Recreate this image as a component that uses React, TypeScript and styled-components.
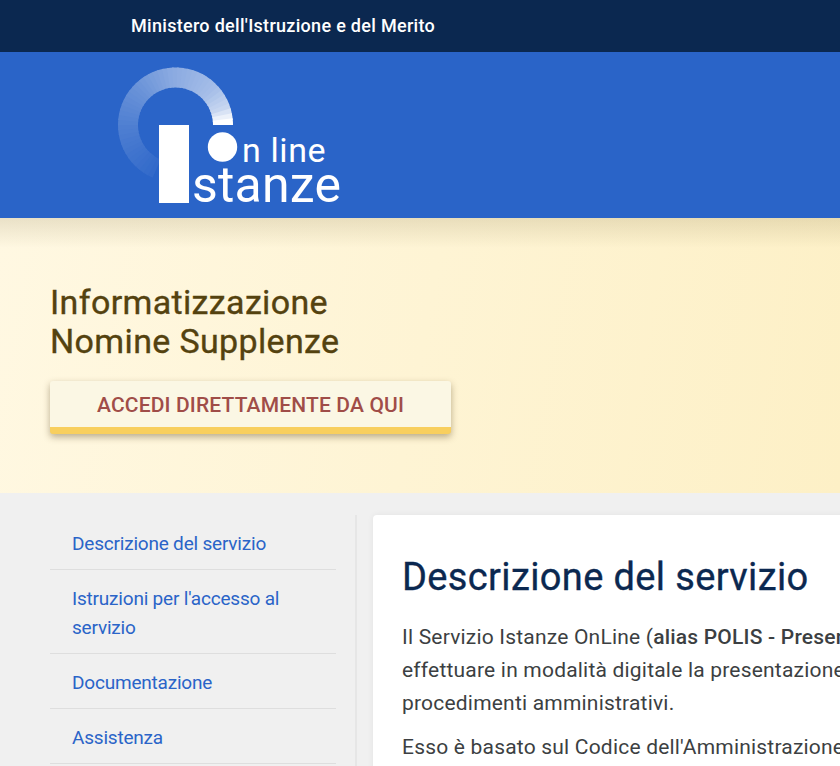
import React from 'react';
import styled, {createGlobalStyle} from 'styled-components';

const FONT = `Roboto, "Noto Sans", "Liberation Sans", sans-serif`;

const menuItems = [
    "Descrizione del servizio",
    "Istruzioni per l'accesso al servizio",
    "Documentazione",
    "Assistenza",
];

// the ring fades from white into the header blue, so it is drawn as short arcs
const RING_STEPS = 48;
const RING_SWEEP = 245;
const ringStops = [
    [0, 1],
    [0.06, 0.74],
    [0.16, 0.58],
    [0.37, 0.45],
    [0.55, 0.29],
    [0.73, 0.17],
    [1, 0.03],
];

const ringAlpha = (t: number) => {
    for (let i = 1; i < ringStops.length; i++) {
        const [t0, a0] = ringStops[i - 1];
        const [t1, a1] = ringStops[i];
        if (t <= t1) return a0 + (a1 - a0) * (t - t0) / (t1 - t0);
    }
    return 0;
};

const ringPoint = (deg: number) => {
    const rad = deg * Math.PI / 180;
    return `${75.5 + 47.5 * Math.cos(rad)} ${65 - 47.5 * Math.sin(rad)}`;
};

const ringColor = (t: number) => {
    const a = ringAlpha(t);
    const mix = (c: number) => Math.round(c + (255 - c) * a);
    return `rgb(${mix(42)},${mix(100)},${mix(200)})`;
};

const Logo = () => (
    <LogoSvg viewBox="0 0 250 150" width="250" height="150">
        {Array.from({length: RING_STEPS}, (_, i) => RING_STEPS - 1 - i).map((i) => {
            const start = i / RING_STEPS * RING_SWEEP;
            const end = (i + 1.3) / RING_STEPS * RING_SWEEP;
            return (
                <path
                    key={i}
                    d={`M ${ringPoint(start)} A 47.5 47.5 0 0 0 ${ringPoint(end)}`}
                    fill="none"
                    stroke={ringColor(i / RING_STEPS)}
                    strokeWidth="20"
                />
            );
        })}
        <rect x="59" y="65" width="30" height="78" fill="#fff"/>
        <circle cx="122.5" cy="87" r="14.7" fill="#fff"/>
        <LogoText x="142" y="102" fontSize="34" letterSpacing="0.6">n line</LogoText>
        <LogoText x="92" y="142" fontSize="50" letterSpacing="0.2">stanze</LogoText>
    </LogoSvg>
);

export default function App() {
    return (
        <>
            <GlobalStyle/>
            <Page>
                <TopBar>
                    <Ministry>Ministero dell'Istruzione e del Merito</Ministry>
                </TopBar>
                <BrandBar>
                    <Logo/>
                </BrandBar>
                <Hero>
                    <HeroTitle>Informatizzazione<br/>Nomine Supplenze</HeroTitle>
                    <HeroButton href="#">ACCEDI DIRETTAMENTE DA QUI</HeroButton>
                </Hero>
                <Content>
                    <Sidebar>
                        <Menu>
                            {menuItems.map((item) => (
                                <MenuItem key={item}>
                                    <MenuLink href="#">{item}</MenuLink>
                                </MenuItem>
                            ))}
                        </Menu>
                    </Sidebar>
                    <Card>
                        <CardTitle>Descrizione del servizio</CardTitle>
                        <Paragraph>
                            Il Servizio Istanze OnLine (<b>alias POLIS - Presentazione On Line delle IStanze</b>) ti consente di<br/>
                            effettuare in modalità digitale la presentazione delle domande connesse ai principali<br/>
                            procedimenti amministrativi.
                        </Paragraph>
                        <Paragraph>
                            Esso è basato sul Codice dell'Amministrazione Digitale e garantisce
                        </Paragraph>
                    </Card>
                </Content>
            </Page>
        </>
    );
}

const GlobalStyle = createGlobalStyle`
  html, body {
    margin: 0;
    padding: 0;
    width: 840px;
    height: 766px;
    overflow: hidden;
    background: #f0f0f0;
    font-family: ${FONT};
  }
`

const Page = styled.div`
  width: 840px;
  height: 766px;
  overflow: hidden;
`

const TopBar = styled.header`
  height: 52px;
  background-color: #0b2850;
  display: flex;
  align-items: center;
  padding: 0 0 2px 131px;
  box-sizing: border-box;
`

const Ministry = styled.span`
  color: #fff;
  font-size: 18px;
  font-weight: 500;
  letter-spacing: 0.3px;
`

const BrandBar = styled.div`
  height: 166px;
  background-color: #2a64c8;
  padding-left: 100px;
  display: flex;
  align-items: flex-start;
`

const LogoSvg = styled.svg`
  display: block;
  margin-top: 8px;
`

const LogoText = styled.text`
  fill: #fff;
  font-family: ${FONT};
  font-weight: 400;
`

const Hero = styled.section`
  height: 275px;
  box-sizing: border-box;
  padding: 65px 0 0 50px;
  background:
    linear-gradient(to bottom, rgba(90, 70, 20, 0.13), rgba(90, 70, 20, 0) 30px),
    linear-gradient(100deg, #fff8e2 0%, #fdf0c6 100%);
`

const HeroTitle = styled.h2`
  margin: 0;
  color: #54420f;
  font-size: 34px;
  font-weight: 400;
  line-height: 39px;
  letter-spacing: 0.35px;
  -webkit-text-stroke: 0.35px #54420f;
`

const HeroButton = styled.a`
  display: block;
  box-sizing: border-box;
  width: 401px;
  height: 53px;
  margin-top: 20px;
  padding-top: 11px;
  text-align: center;
  text-decoration: none;
  color: #a04d48;
  background-color: #fbf7e4;
  border-bottom: 7px solid #f8cf5e;
  border-radius: 3px;
  box-shadow: 0 3px 7px rgba(80, 60, 20, 0.4);
  font-size: 21px;
  font-weight: 500;
  line-height: 26px;
  letter-spacing: 0.15px;
`

const Content = styled.main`
  display: flex;
  align-items: flex-start;
  padding: 22px 0 0 50px;
`

const Sidebar = styled.aside`
  flex: none;
  width: 286px;
  height: 300px;
  padding-right: 19px;
  border-right: 2px solid #e6e6e6;
`

const Menu = styled.ul`
  list-style: none;
  margin: 0;
  padding: 0;
`

const MenuItem = styled.li`
  padding: 15.25px 22px 10.25px;
  border-bottom: 1px solid #dedede;
`

const MenuLink = styled.a`
  color: #2a64c8;
  font-size: 19px;
  line-height: 28.5px;
  letter-spacing: -0.2px;
  text-decoration: none;
`

const Card = styled.article`
  flex: none;
  width: 800px;
  height: 400px;
  box-sizing: border-box;
  margin-left: 16px;
  padding: 38px 29px;
  background-color: #fff;
  border-radius: 4px;
  box-shadow: 0 0 6px rgba(0, 0, 0, 0.06);
`

const CardTitle = styled.h1`
  margin: 0 0 20px;
  color: #0b2850;
  font-size: 38px;
  font-weight: 400;
  line-height: 48px;
  letter-spacing: 0.37px;
  -webkit-text-stroke: 0.35px #0b2850;
  white-space: nowrap;
`

const Paragraph = styled.p`
  margin: 0 0 11px;
  color: #3c3f42;
  font-size: 21px;
  line-height: 33px;
  letter-spacing: 0.2px;
  white-space: nowrap;

  b {
    font-weight: 500;
  }
`
